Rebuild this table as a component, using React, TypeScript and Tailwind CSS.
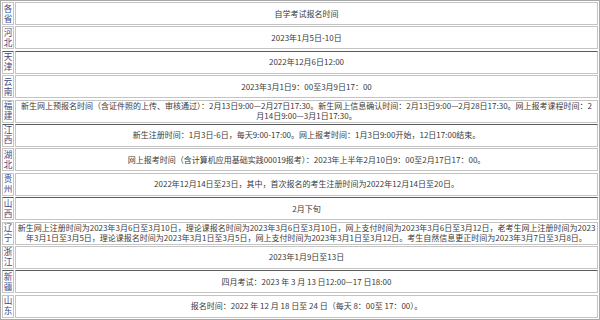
import React from "react";

type Row = { p: string; lines: string[]; dark?: boolean };

const rows: Row[] = [
  { p: "各省", lines: ["自学考试报名时间"] },
  { p: "河北", lines: ["2023年1月5日-10日"] },
  { p: "天津", lines: ["2022年12月6日12:00"], dark: true },
  { p: "云南", lines: ["2023年3月1日9：00至3月9日17：00"] },
  {
    p: "福建",
    lines: [
      "新生网上预报名时间（含证件照的上传、审核通过）：2月13日9:00—2月27日17:30。新生网上信息确认时间：2月13日9:00—2月28日17:30。网上报考课程时间：2",
      "月14日9:00—3月1日17:30。",
    ],
  },
  {
    p: "江西",
    lines: ["新生注册时间：1月3日-6日，每天9:00-17:00。网上报考时间：1月3日9:00开始，12日17:00结束。"],
    dark: true,
  },
  {
    p: "湖北",
    lines: ["网上报考时间（含计算机应用基础实践00019报考）：2023年上半年2月10日9：00至2月17日17：00。"],
  },
  {
    p: "贵州",
    lines: ["2022年12月14日至23日，其中，首次报名的考生注册时间为2022年12月14日至20日。"],
  },
  { p: "山西", lines: ["2月下旬"], dark: true },
  {
    p: "辽宁",
    lines: [
      "新生网上注册时间为2023年3月6日至3月10日，理论课报名时间为2023年3月6日至3月10日，网上支付时间为2023年3月6日至3月12日，老考生网上注册时间为2023",
      "年3月1日至3月5日，理论课报名时间为2023年3月1日至3月5日，网上支付时间为2023年3月1日至3月12日。考生自然信息更正时间为2023年3月7日至3月8日。",
    ],
  },
  { p: "浙江", lines: ["2023年1月9日至13日"] },
  { p: "新疆", lines: ["四月考试：2023 年 3 月 13 日12:00—17 日18:00"], dark: true },
  { p: "山东", lines: ["报名时间：2022 年 12 月 18 日至 24 日（每天 8：00至 17：00）。"] },
];

export default function App() {
  return (
    <div className="w-[600px] h-[320px] box-border bg-white border border-[#a8a8a8] p-px flex flex-col gap-y-[1.4px] font-['Noto_Sans_CJK_SC','Noto_Sans',sans-serif]">
      {rows.map((r) => (
        <div key={r.p} className="flex gap-x-px h-[23px] shrink-0">
          <div
            className={
              "w-[12px] shrink-0 box-border border border-[#c4c4c4] flex flex-col items-center justify-center text-[8.6px] leading-[10px] text-[#3c4a88] font-['Liberation_Sans','Noto_Sans_CJK_SC',sans-serif] " +
              (r.dark ? "border-t-[#5a5a5a]" : "")
            }
          >
            <div className="h-[10px]">{r.p[0]}</div>
            <div className="h-[10px]">{r.p[1]}</div>
          </div>
          <div
            className={
              "flex-1 min-w-0 box-border border border-[#c4c4c4] flex flex-col items-center justify-center text-center text-[8px] leading-[10px] text-[#3a3a3a] px-[2px] " +
              (r.dark ? "border-t-[#5a5a5a]" : "")
            }
          >
            {r.lines.map((l, i) => (
              <span key={i} className="whitespace-nowrap">
                {l}
              </span>
            ))}
          </div>
        </div>
      ))}
    </div>
  );
}
